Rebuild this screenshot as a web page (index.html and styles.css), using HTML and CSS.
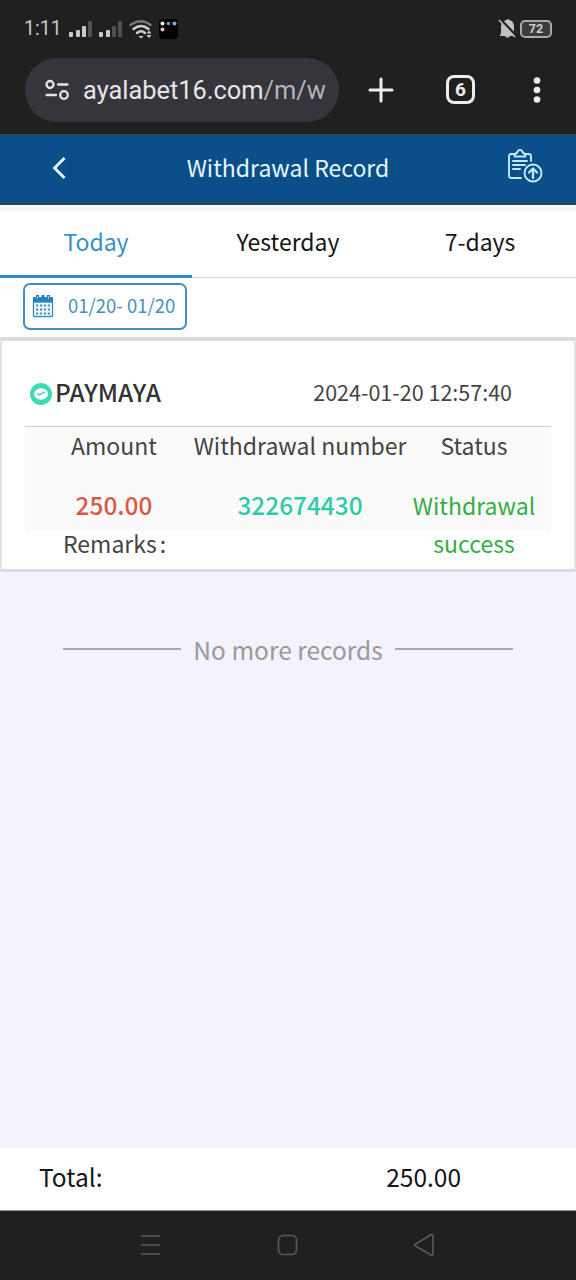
FILE: index.html
```html
<!DOCTYPE html>
<html lang="en">
<head>
<meta charset="utf-8">
<title>Withdrawal Record</title>
<link rel="stylesheet" href="styles.css">
</head>
<body>
<div class="screen">
  <div class="status-bar">
    <span class="clock">1:11</span>
    <svg class="status-icons" width="112" height="24" viewBox="0 0 112 24">
      <g fill="#c9c9c9">
        <rect x="0" y="15" width="4" height="5" rx="1"/><rect x="7" y="13" width="4" height="7" rx="1"/><rect x="13" y="9" width="4" height="11" rx="1"/>
        <rect x="30" y="15" width="4" height="5" rx="1"/><rect x="37" y="13" width="4" height="7" rx="1"/>
      </g>
      <g fill="#505050"><rect x="19" y="4" width="4" height="16" rx="1"/><rect x="43" y="9" width="4" height="11" rx="1"/><rect x="49" y="4" width="4" height="16" rx="1"/></g>
      <g fill="none" stroke-linecap="round" stroke-width="2.4">
        <path d="M61.500 8Q72 .5 81.500 8" stroke="#777"/><path d="M64.500 12Q72 6 79.500 12M68 16Q72 12.500 76 16" stroke="#d0d0d0"/>
      </g>
      <path d="M69.500 19H74.500L72 21.500ZM77.500 16.500L80 13.500L82.500 16.500ZM77.500 18L80 21L82.500 18Z" fill="#d0d0d0"/>
      <rect x="90" y="2" width="19" height="20" rx="4" fill="#030304"/>
      <circle cx="93.500" cy="6.500" r="2" fill="#dfeeed"/><circle cx="99.500" cy="6.500" r="1.800" fill="#9b78d5"/><circle cx="105.500" cy="6.500" r="2" fill="#77afe9"/><circle cx="93.500" cy="12.500" r="2" fill="#e8bdc8"/>
    </svg>
    <svg class="bell" width="20" height="22" viewBox="0 0 20 22">
      <path d="M3 15V9Q3 3 8 2.300Q10 0 12 2.300Q16 3.500 16 9V14L18 17V18H2V17Z" fill="#c0c0c0"/><path d="M7 18H12Q9.500 21.500 7 18Z" fill="#c0c0c0"/>
      <path d="M1.500 .5L18.500 18.500" stroke="#202021" stroke-width="3"/><path d="M1 2L17 19" stroke="#c0c0c0" stroke-width="1.600"/>
    </svg>
    <span class="battery">72</span>
  </div>
  <div class="browser-bar">
    <div class="address">
      <svg width="26" height="24" viewBox="0 0 26 24" fill="none" stroke="#e4e4e8" stroke-width="2.300" stroke-linecap="round"><circle cx="6" cy="6.500" r="3.500"/><path d="M14 6.500H23.500M2.500 17H12"/><circle cx="20" cy="17" r="3.800"/></svg>
      <span class="url">ayalabet16.com<span class="path">/m/w</span></span>
    </div>
    <svg class="plus" width="26" height="26" viewBox="0 0 26 26" stroke="#eee" stroke-width="3" stroke-linecap="round"><path d="M2 13H24M13 2V24"/></svg>
    <span class="tab-count">6</span>
    <svg class="dots" width="8" height="26" viewBox="0 0 8 26" fill="#eee"><circle cx="4" cy="3.500" r="3.300"/><circle cx="4" cy="13" r="3.300"/><circle cx="4" cy="22.500" r="3.300"/></svg>
  </div>
  <header class="page-header">
    <svg class="back" width="16" height="24" viewBox="0 0 16 24" fill="none" stroke="#e8f8ff" stroke-width="2.800"><path d="M13.500 2L3.500 12L13.500 22"/></svg>
    <h1 class="title">Withdrawal Record</h1>
    <svg class="upload" width="36" height="36" viewBox="0 0 36 36" fill="none" stroke="#c4eaff" stroke-width="1.900" stroke-linecap="round" stroke-linejoin="round">
      <path d="M7 6H4.500Q2 6 2 8.500V27.500Q2 30 4.500 30H14M18 6H21.500Q24 6 24 8.500V13"/><path d="M7.500 8.500Q7.500 5 10 5Q10.500 2 13 2Q15.500 2 16 5Q18.500 5 18.500 8.500Z"/><path d="M6 13H20M6 17H18M6 21H13"/><circle cx="26" cy="25" r="8.500"/><path d="M26 30V21M22 24.500L26 20.500L30 24.500" stroke-width="2.300"/>
    </svg>
  </header>
  <nav class="tabs">
    <span class="tab active">Today</span><span class="tab">Yesterday</span><span class="tab">7-days</span>
  </nav>
  <div class="filter">
    <div class="date-range">
      <svg width="22" height="24" viewBox="0 0 22 24"><path d="M1 3H4V1H7V3H9.500V1H12.500V3H15V1H18V3H21V9H1Z" fill="#2482c7"/><rect x="1.500" y="8" width="19" height="14.500" rx="1" fill="#fff" stroke="#3a8bc2" stroke-width="1.400"/><path d="M4 11.500H19M4 15.500H19M4 19.500H19" stroke="#3a8bc2" stroke-width="2" stroke-dasharray="2.300 1.600"/><path d="M5.500 2V5M16.500 2V5" stroke="#8cc8ee" stroke-width="1"/></svg>
      <span class="dates">01/20- 01/20</span>
    </div>
  </div>
  <section class="card">
    <div class="card-head">
      <svg width="24" height="24" viewBox="0 0 24 24"><circle cx="12" cy="12" r="11" fill="#3edbb3"/><ellipse cx="12" cy="12" rx="7" ry="5.700" fill="#f2fffb"/><path d="M8.500 11.500L10.500 12.800L16 9.800" fill="none" stroke="#4ab99c" stroke-width="1.200"/></svg>
      <span class="method">PAYMAYA</span>
      <span class="time">2024-01-20 12:57:40</span>
    </div>
    <div class="details">
      <div class="col"><span class="label">Amount</span><span class="value amount">250.00</span></div>
      <div class="col"><span class="label">Withdrawal number</span><span class="value number">322674430</span></div>
      <div class="col"><span class="label">Status</span><span class="value status">Withdrawal success</span></div>
    </div>
    <div class="remarks">Remarks<span class="colon">:</span></div>
  </section>
  <div class="list-end"><i class="rule"></i><span class="end-text">No more records</span><i class="rule"></i></div>
  <footer class="total"><span class="total-label">Total:</span><span class="total-value">250.00</span></footer>
  <div class="system-nav">
    <svg width="22" height="24" viewBox="0 0 22 24" stroke="#5a5a5a" stroke-width="1.600"><path d="M2 3H21M2 12H21M2 21H21"/></svg>
    <svg width="22" height="24" viewBox="0 0 22 24" fill="none" stroke="#5a5a5a" stroke-width="1.600"><rect x="2.500" y="2.500" width="18" height="19" rx="4.500"/></svg>
    <svg width="22" height="26" viewBox="0 0 22 26" fill="none" stroke="#5a5a5a" stroke-width="1.600" stroke-linejoin="round"><path d="M2.500 12L18 2.800Q20 2 20 4V21Q20 24 18 23L2.500 14Q1 13 2.500 12Z"/></svg>
  </div>
</div>
</body>
</html>
```
FILE: styles.css
```css
* { box-sizing: border-box; }
body { margin: 0; background: #f4f3fd; font-family: "Noto Sans CJK SC", "Noto Sans", sans-serif; }
svg { display: block; flex: none; }
.screen { width: 576px; height: 1280px; display: flex; flex-direction: column; overflow: hidden; }
.status-bar { height: 58px; flex: none; background: #202021; display: flex; align-items: center; padding: 0 24px; font-family: Roboto, sans-serif; color: #c8c8c8; }
.clock { font-size: 19.5px; width: 45px; line-height: 24px; }
.bell { margin-left: auto; margin-right: 2px; }
.battery { width: 32px; height: 18px; border: 2px solid #aaa; border-radius: 5px; background: #3c3c3c; font-size: 12.5px; font-weight: 700; line-height: 14px; text-align: center; color: #ccc; }
.browser-bar { height: 76px; flex: none; background: #202021; display: flex; align-items: flex-start; padding-left: 25px; }
.address { width: 314px; height: 64px; border-radius: 32px; background: #35353b; display: flex; align-items: center; padding-left: 19px; gap: 13px; font-family: Roboto, sans-serif; }
.url { font-size: 25.4px; color: #e6e6e8; white-space: nowrap; }
.path { color: #b4b4ba; }
.plus { margin: 18.5px 0 0 28.500px; }
.tab-count { margin: 17px 0 0 52.500px; width: 29px; height: 29px; border: 3px solid #eee; border-radius: 8px; color: #eee; font: 700 19px/23px Roboto, sans-serif; text-align: center; }
.dots { margin: 19px 0 0 58px; }
.page-header { height: 71px; flex: none; background: #0a4f88; border-top: 1px solid #34434e; border-bottom: 2px solid #30404c; display: grid; grid-template-columns: 100px 1fr 100px; align-items: center; }
.back { margin: -2px 0 0 51px; }
.title { margin: -5px 0 0; font-size: 23px; line-height: 36px; font-weight: 400; text-align: center; color: #e6f6ff; }
.upload { margin: -7px 0 0 31px; }
.tabs { height: 73px; flex: none; border-top: 6px solid #f4f5f8; border-bottom: 1px solid #d9d9dc; background: #fff; display: grid; grid-template-columns: repeat(3, 1fr); }
.tab { height: 67px; line-height: 60px; text-align: center; font-size: 23px; color: #161616; }
.tab.active { color: #3690c8; border-bottom: 3px solid #348ac4; }
.filter { height: 59px; flex: none; background: #fff; padding: 5px 23px; }
.date-range { width: 164px; height: 47px; border: 2px solid #438fb9; border-radius: 7px; display: flex; align-items: center; padding-left: 7px; }
.date-range svg { margin-top: -1px; }
.dates { margin: -4px 0 0 14px; font-size: 18.5px; line-height: 30px; color: #4790ba; white-space: nowrap; }
.card { height: 235px; flex: none; background: #fff; border: 2px solid #e2e2e5; border-top: 4px solid #dadadc; border-bottom: 3px solid #dcdcdf; padding: 0 23px; }
.card-head { height: 86px; border-bottom: 1px solid #ccc; display: flex; align-items: center; padding: 21px 39px 0 4px; }
.method { font-size: 24.4px; font-weight: 500; color: #333; margin: -4px 0 0 2px; line-height: 36px; }
.time { margin: -4px 0 0 auto; font-size: 21.5px; color: #444; line-height: 36px; }
.details { height: 104px; background: #fafafa; display: grid; grid-template-columns: 178px 194px 154px; }
.col { display: flex; flex-direction: column; align-items: center; }
.label { font-size: 23px; line-height: 36px; color: #444; white-space: nowrap; }
.value { margin-top: 23px; font-size: 24.4px; line-height: 38px; text-align: center; }
.amount { color: #d75a48; font-weight: 500; }
.number { color: #2dcba8; font-weight: 500; }
.status { font-size: 23px; color: #32ae42; }
.remarks { font-size: 23px; line-height: 25px; color: #444; padding-left: 38px; }
.colon { margin-left: 3px; }
.list-end { flex: 1; display: flex; align-items: flex-start; justify-content: center; padding-top: 61px; }
.rule { width: 118px; height: 2px; background: #aaa; margin-top: 15px; }
.end-text { margin: 0 12px; color: #999; font-size: 24.5px; line-height: 34px; }
.total { height: 63px; flex: none; background: #fff; border-bottom: 1px solid #999; display: flex; padding: 0 115px 0 39px; justify-content: space-between; font-size: 24.5px; line-height: 57px; color: #161616; }
.system-nav { height: 69px; flex: none; background: #202021; display: flex; align-items: center; justify-content: space-between; padding: 0 141px 2px 139px; }
```
